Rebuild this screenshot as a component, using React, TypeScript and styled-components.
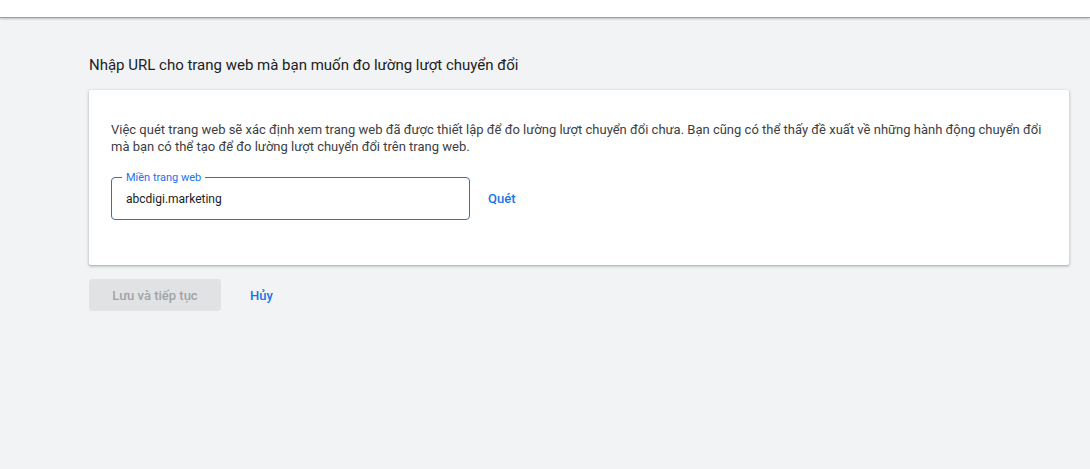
import React, { useState } from 'react'
import styled, { createGlobalStyle } from 'styled-components'

const GlobalStyle = createGlobalStyle`
  html, body {
    margin: 0;
    padding: 0;
    background: #f1f3f4;
    font-family: Roboto, 'Noto Sans', Arial, sans-serif;
  }
`

const TopBar = styled.div`
  height: 17px;
  background: #ffffff;
  border-bottom: 1px solid #9aa0a6;
  box-shadow: 0 1px 2px rgba(60, 64, 67, 0.3);
`

const Page = styled.main`
  padding: 37px 21px 0 89px;
`

const Heading = styled.h2`
  margin: 0 0 15px;
  font-size: 15px;
  font-weight: 400;
  line-height: 20px;
  color: #202124;
`

const Card = styled.section`
  background: #ffffff;
  border-radius: 2px;
  box-shadow: 0 1px 2px rgba(60, 64, 67, 0.3), 0 1px 3px 1px rgba(60, 64, 67, 0.12);
  padding: 31px 18px 45px 22px;
`

const Description = styled.p`
  margin: 0 0 22px;
  font-size: 13px;
  letter-spacing: 0;
  line-height: 17px;
  color: #3c4043;
`

const FieldRow = styled.div`
  display: flex;
  align-items: center;
  gap: 18px;
`

const Outline = styled.div`
  position: relative;
  width: 359px;
  height: 43px;
  box-sizing: border-box;
  padding: 0 14px;
  border: 1px solid #3a6fb0;
  border-radius: 4px;
  display: flex;
  align-items: center;
`

const FloatingLabel = styled.label`
  position: absolute;
  top: -7px;
  left: 10px;
  padding: 0 4px;
  background: #ffffff;
  font-size: 11px;
  line-height: 13px;
  color: #1a73e8;
`

const TextInput = styled.input`
  border: none;
  outline: none;
  padding: 0;
  width: 100%;
  font-family: Roboto, 'Noto Sans', Arial, sans-serif;
  font-size: 12px;
  color: #202124;
  background: transparent;
  caret-color: #000;
`

const TextButton = styled.button`
  border: none;
  background: transparent;
  padding: 0;
  font-family: Roboto, 'Noto Sans', Arial, sans-serif;
  font-size: 13px;
  font-weight: 500;
  color: #1a73e8;
  cursor: pointer;
`

const Actions = styled.div`
  display: flex;
  align-items: center;
  gap: 29px;
  margin-top: 14px;
`

const DisabledButton = styled.button`
  width: 132px;
  height: 32px;
  border: none;
  border-radius: 4px;
  background: #e1e2e3;
  color: #a0a4a8;
  font-family: Roboto, 'Noto Sans', Arial, sans-serif;
  font-size: 13px;
  font-weight: 500;
`

const App: React.FC = () => {
  const [domain, setDomain] = useState('abcdigi.marketing')

  return (
    <>
      <GlobalStyle />
      <TopBar />
      <Page>
        <Heading>Nhập URL cho trang web mà bạn muốn đo lường lượt chuyển đổi</Heading>
        <Card>
          <Description>
            Việc quét trang web sẽ xác định xem trang web đã được thiết lập để đo lường lượt chuyển
            đổi chưa. Bạn cũng có thể thấy đề xuất về những hành động chuyển đổi mà bạn có thể tạo để
            đo lường lượt chuyển đổi trên trang web.
          </Description>
          <FieldRow>
            <Outline>
              <FloatingLabel htmlFor="domain">Miền trang web</FloatingLabel>
              <TextInput
                id="domain"
                value={domain}
                onChange={(e) => setDomain(e.target.value)}
                autoFocus
              />
            </Outline>
            <TextButton>Quét</TextButton>
          </FieldRow>
        </Card>
        <Actions>
          <DisabledButton disabled>Lưu và tiếp tục</DisabledButton>
          <TextButton>Hủy</TextButton>
        </Actions>
      </Page>
    </>
  )
}

export default App
